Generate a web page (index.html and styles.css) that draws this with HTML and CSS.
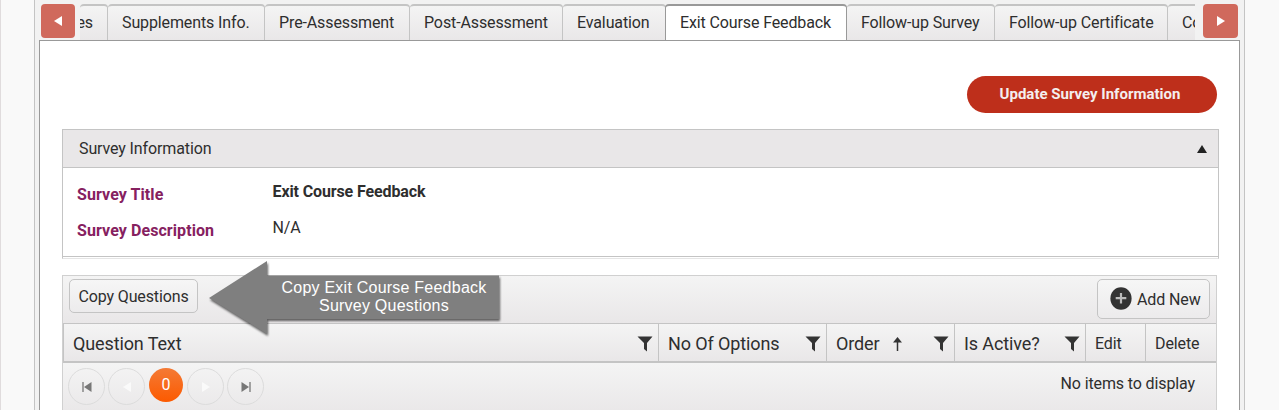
FILE: index.html
```html
<!DOCTYPE html>
<html lang="en">
<head>
<meta charset="utf-8">
<title>Exit Course Feedback</title>
<link rel="stylesheet" href="styles.css">
</head>
<body>
<div class="shell">
  <nav class="tabbar">
    <button class="scroll-btn" aria-label="Previous tabs"><svg width="8" height="10" viewBox="0 0 8 10"><path d="M8 0v10L0 5z" fill="#fff"/></svg></button>
    <div class="tabs">
      <div class="tab tab-first"><span>es</span></div>
      <div class="tab w157">Supplements Info.</div>
      <div class="tab w145">Pre-Assessment</div>
      <div class="tab w153">Post-Assessment</div>
      <div class="tab w103">Evaluation</div>
      <div class="tab w181 active">Exit Course Feedback</div>
      <div class="tab w148">Follow-up Survey</div>
      <div class="tab w173">Follow-up Certificate</div>
      <div class="tab w173">Co</div>
    </div>
    <button class="scroll-btn" aria-label="Next tabs"><svg width="8" height="10" viewBox="0 0 8 10"><path d="M0 0v10l8-5z" fill="#fff"/></svg></button>
  </nav>
  <main class="panel">
    <div class="actions"><button class="update">Update Survey Information</button></div>
    <section class="survey">
      <header class="survey-head"><span>Survey Information</span><svg width="10" height="8" viewBox="0 0 10 8"><path d="M5 0l5 8H0z" fill="#222"/></svg></header>
      <div class="survey-body">
        <div class="field"><span class="label">Survey Title</span><b class="value">Exit Course Feedback</b></div>
        <div class="field"><span class="label">Survey Description</span><span class="value">N/A</span></div>
      </div>
    </section>
    <section class="grid">
      <div class="toolbar">
        <button class="btn copy">Copy Questions</button>
        <button class="btn add"><svg width="22" height="23" viewBox="0 0 22 23"><ellipse cx="11" cy="11.5" rx="10.6" ry="11.2" fill="#333"/><path d="M11 6v10.500M5.700 11.200h10.600" stroke="#bbb" stroke-width="2.200"/></svg><span>Add New</span></button>
      </div>
      <div class="columns">
        <div class="col"><span>Question Text</span><svg class="funnel" viewBox="0 0 16 16"><path d="M.5.5h15L10 7v8.500L7 13V7z"/></svg></div>
        <div class="col"><span>No Of Options</span><svg class="funnel" viewBox="0 0 16 16"><path d="M.5.5h15L10 7v8.500L7 13V7z"/></svg></div>
        <div class="col"><span>Order</span><svg class="sort" viewBox="0 0 9 14"><path d="M4.500 14V2" stroke="#333" stroke-width="1.500"/><path d="M0 5.500L4.500 0 9 5.500z" fill="#333"/></svg><svg class="funnel" viewBox="0 0 16 16"><path d="M.5.5h15L10 7v8.500L7 13V7z"/></svg></div>
        <div class="col"><span>Is Active?</span><svg class="funnel" viewBox="0 0 16 16"><path d="M.5.5h15L10 7v8.500L7 13V7z"/></svg></div>
        <div class="col small">Edit</div>
        <div class="col small">Delete</div>
      </div>
      <footer class="pager">
        <div class="pages">
          <span class="page"><svg width="10" height="10" viewBox="0 0 10 10"><path d="M1 0v10" stroke="#777" stroke-width="1.300"/><path d="M9.500 0v10L2 5z" fill="#777"/></svg></span>
          <span class="page"><svg width="8" height="10" viewBox="0 0 8 10"><path d="M8 0v10L0 5z" fill="#fafafa"/></svg></span>
          <span class="page current">0</span>
          <span class="page"><svg width="8" height="10" viewBox="0 0 8 10"><path d="M0 0v10l8-5z" fill="#fafafa"/></svg></span>
          <span class="page"><svg width="10" height="10" viewBox="0 0 10 10"><path d="M9 0v10" stroke="#777" stroke-width="1.300"/><path d="M.5 0v10L8 5z" fill="#777"/></svg></span>
        </div>
        <span class="empty">No items to display</span>
      </footer>
    </section>
  </main>
</div>
<div class="callout">
  <svg class="callout-shape" width="310" height="90" viewBox="0 0 310 90"><path d="M5 38L63 1v14.500h232V59H63v15z" fill="#7f7f7f"/></svg>
  <div class="callout-text">Copy Exit Course Feedback<br>Survey Questions</div>
</div>
</body>
</html>
```

FILE: styles.css
```css
* { box-sizing: border-box; }
html, body { margin: 0; height: 410px; overflow: hidden; }
body { background: #f9f9f9; border-left: 1px solid #e0dcdd; font: 16px/20px Roboto, sans-serif; letter-spacing: -.12px; color: #2e2e2e; position: relative; }
button { font: inherit; letter-spacing: inherit; color: inherit; margin: 0; padding: 0; }
svg { display: block; flex: none; }
.shell { width: 1211px; height: 410px; margin-left: 33px; padding: 0 4px; background: #f2f2f2; border: solid #c4c4c4; border-width: 0 1px; }
.tabbar { display: flex; height: 40px; padding: 4px 2px 0 2px; }
.scroll-btn { flex: none; width: 34px; height: 34px; border: 0; border-radius: 4px; background: #d0695c; display: flex; align-items: center; justify-content: center; }
.scroll-btn:last-child { width: 35px; }
.tabs { display: flex; flex: none; width: 1115px; margin-left: 5px; margin-right: 8px; overflow: hidden; }
.tab { flex: none; height: 36px; padding: 7px 0 0 14px; line-height: 20px; border-top: 2px solid #c4c4c4; border-right: 1px solid #c4c4c4; border-radius: 4px 4px 0 0; background: linear-gradient(#f4f4f4, #e9e7e8); white-space: nowrap; }
.tab-first { width: 28px; padding-left: 0; padding-right: 14px; display: flex; justify-content: flex-end; }
.w157 { width: 157px; } .w145 { width: 145px; } .w153 { width: 153px; } .w103 { width: 103px; }
.w181 { width: 182px; } .w148 { width: 148px; } .w173 { width: 173px; }
.active { background: #fff; border-color: #999; border-left: 1px solid #999; margin-left: -1px; }
.panel { height: 370px; background: #fff; border: solid #999; border-width: 1px 1px 0; padding: 35px 20px 0 22px; }
.actions { display: flex; justify-content: flex-end; padding-right: 2px; }
.update { width: 250px; height: 37px; border: 0; border-radius: 19px; background: #be2f1b; color: #f4eeee; font-weight: 700; font-size: 15px; letter-spacing: 0; padding: 0 4px 1px 0; }
.survey { margin-top: 16px; height: 130px; border: 1px solid #c4c4c4; border-bottom-color: #e5e5e5; }
.survey-head { display: flex; align-items: center; justify-content: space-between; height: 38px; padding: 0 11px 0 16px; background: #e9e7e8; border-bottom: 1px solid #c4c4c4; }
.survey-body { height: 89px; border-bottom: 1px solid #c4c4c4; padding: 17px 14px; display: flex; flex-direction: column; gap: 16px; }
.field { display: grid; grid-template-columns: 196px 1fr; height: 20px; }
.label { color: #86215f; font-weight: 700; letter-spacing: .08px; }
.value { margin-top: -3px; margin-left: -.5px; }
.grid { width: 1155px; margin-top: 16px; height: 140px; border: 1px solid #d0d0d0; border-bottom: 0; }
.toolbar { height: 47px; display: flex; justify-content: space-between; align-items: flex-start; padding: 3px 6px; background: linear-gradient(#f4f4f4, #e9e7e8); }
.btn { border: 1px solid #c4c4c4; border-radius: 5px; background: linear-gradient(#f6f6f6, #ecebec); }
.copy { width: 129px; height: 34px; padding-top: 1px; }
.add { width: 113px; height: 40px; display: flex; align-items: center; gap: 5px; padding: 1px 0 0 12px; }
.add svg { margin-bottom: 3px; }
.add span { padding-top: 1px; }
.columns { display: grid; grid-template-columns: 596px 168px 128px 131px 60px 70px; height: 40px; border-top: 1px solid #c4c4c4; border-bottom: 2px solid #c4c4c4; background: linear-gradient(#f4f4f4, #e9e7e8); font-size: 18px; }
.col { display: flex; align-items: center; padding: 2px 5px 0 9px; border-right: 1px solid #c4c4c4; }
.col:first-child { border-left: 1px solid #c4c4c4; }
.col:last-child { border-right: 0; }
.small { font-size: 16px; }
.funnel { width: 16px; height: 16px; margin-left: auto; fill: #333; }
.sort { width: 9px; height: 14px; margin-left: 13px; }
.pager { height: 52px; display: flex; justify-content: space-between; padding: 5px 21px 0 5px; background: linear-gradient(#f4f4f4, #e9e7e8); }
.pages { display: flex; gap: 3px; }
.page { width: 37px; height: 37px; display: flex; align-items: center; justify-content: center; border: 1px solid #dcdcdc; border-radius: 50%; }
.page svg { margin-top: 1px; }
.current { width: 34px; height: 34px; border: 0; margin: 0 1px; background: linear-gradient(#f47a35, #fc5a00); color: #fff; }
.empty { margin-top: 6px; }
.callout { position: absolute; left: 203px; top: 260px; width: 310px; height: 90px; }
.callout-shape { filter: drop-shadow(1px 2px 1px rgba(0, 0, 0, .6)); }
.callout-text { position: absolute; left: 63px; top: 19px; width: 234px; text-align: center; color: #fff; font: 16px/18px "Liberation Sans", sans-serif; letter-spacing: .23px; }
```
